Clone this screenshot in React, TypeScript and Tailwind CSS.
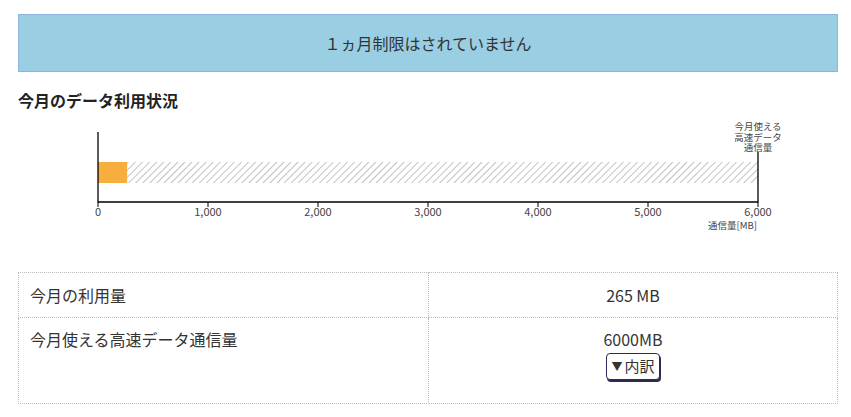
import React from 'react'

// ─── Data ─────────────────────────────────────────────────────────────────────

const USED_MB = 265
const LIMIT_MB = 6000
const TICKS = [0, 1000, 2000, 3000, 4000, 5000, 6000]

// chart geometry (svg coords, svg starts at page x=0)
const X0 = 98
const X1 = 758
const TOP = 4 // headroom so the limit label is not clipped
const scale = (v: number) => X0 + ((X1 - X0) * v) / LIMIT_MB

const FONT = { fontFamily: '"Noto Sans CJK JP", "Noto Sans", sans-serif' }

function UsageChart() {
  const usedX = scale(USED_MB)
  return (
    <svg width={851} height={118} className="block" style={FONT}>
      <defs>
        <pattern id="hatch" width="5" height="5" patternUnits="userSpaceOnUse" patternTransform="rotate(45)">
          <rect width="5" height="5" fill="#fff" />
          <line x1="0" y1="0" x2="0" y2="5" stroke="#a8a8a8" strokeWidth="1.4" />
        </pattern>
      </defs>

      <g transform={`translate(0 ${TOP})`}>
        {/* remaining + used bar */}
        <rect x={usedX} y={42} width={X1 - usedX} height={21} fill="url(#hatch)" />
        <rect x={X0} y={42} width={usedX - X0} height={21} fill="#f6ae3f" />

        {/* axes */}
        <line x1={X0} y1={12} x2={X0} y2={82.5} stroke="#000" strokeWidth="1.3" />
        <line x1={X0} y1={82} x2={X1} y2={82} stroke="#000" strokeWidth="1.3" />
        <line x1={X1} y1={32} x2={X1} y2={82.5} stroke="#000" strokeWidth="1.3" />

        {TICKS.map(t => (
          <g key={t}>
            <line x1={scale(t)} y1={82} x2={scale(t)} y2={87} stroke="#000" strokeWidth="1" />
            <text x={scale(t)} y={96} fontSize="11" fill="#444" textAnchor="middle">
              {t.toLocaleString('en-US')}
            </text>
          </g>
        ))}
        <text x={X1 - 1} y={109} fontSize="9.5" fill="#444" textAnchor="end">通信量[MB]</text>

        {/* limit label */}
        <g fontSize="9.5" fill="#444" textAnchor="middle">
          <text x={X1} y={10}>今月使える</text>
          <text x={X1} y={20.5}>高速データ</text>
          <text x={X1} y={31}>通信量</text>
        </g>
      </g>
    </svg>
  )
}

// ─── Component ────────────────────────────────────────────────────────────────

export default function App() {
  return (
    <div className="w-[851px] h-[417px] bg-white text-[#333] overflow-hidden" style={FONT}>
      <div className="px-[18px] pt-[14px]">
        {/* ── Limit banner ── */}
        <div className="w-[820px] h-[58px] flex items-center justify-center bg-[#99cee3] border border-[#8fb3e3] text-[16px] text-[#333]">
          １ヵ月制限はされていません
        </div>

        <h2 className="mt-[17px] text-[16px] font-bold text-[#222] leading-[22px]">今月のデータ利用状況</h2>
      </div>

      <div className="mt-[5px]">
        <UsageChart />
      </div>

      {/* ── Usage table ── */}
      <div className="px-[18px] mt-[38px]">
        <table className="w-[820px] border-collapse text-[16px] text-[#333]">
          <tbody>
            <tr className="h-[45px]">
              <td className="w-[410px] border border-dotted border-[#bbb] px-[11px] align-middle">今月の利用量</td>
              <td className="border border-dotted border-[#bbb] text-center align-middle">265 MB</td>
            </tr>
            <tr className="h-[86px]">
              <td className="border border-dotted border-[#bbb] px-[11px] pt-[9px] align-top">今月使える高速データ通信量</td>
              <td className="border border-dotted border-[#bbb] pt-[9px] align-top text-center">
                <div className="leading-[24px]">6000MB</div>
                <button
                  type="button"
                  className="mt-[2px] inline-flex items-center gap-[2px] h-[27px] px-[4px] rounded-[4px] border border-[#2b2b55] shadow-[1px_2px_0_#2b2b55] bg-white text-[15px] text-[#333]"
                >
                  <span className="text-[11px]">▼</span>内訳
                </button>
              </td>
            </tr>
          </tbody>
        </table>
      </div>
    </div>
  )
}
